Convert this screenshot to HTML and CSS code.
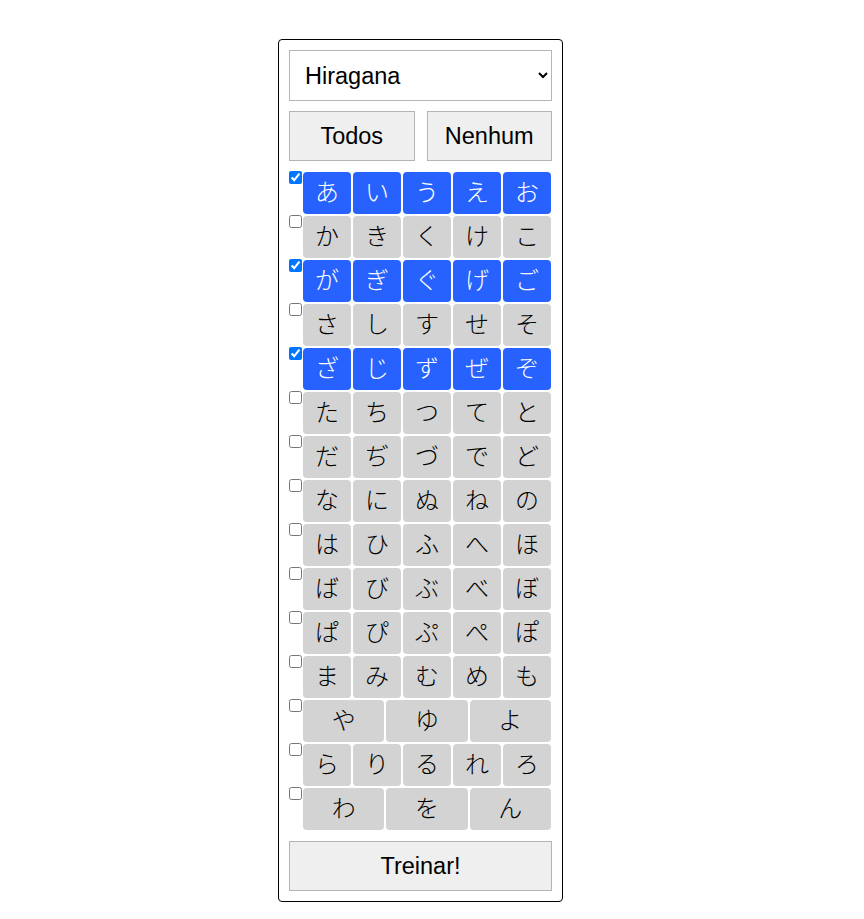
FILE: index.html
```html
<!DOCTYPE html>
<html lang="pt">
<head>
<meta charset="utf-8">
<title>Kana</title>
<link rel="stylesheet" href="styles.css">
</head>
<body>
<div class="panel">
  <select class="kind">
    <option>Hiragana</option>
    <option>Katakana</option>
  </select>
  <div class="actions">
    <button class="btn">Todos</button>
    <button class="btn">Nenhum</button>
  </div>
  <div class="rows">
    <div class="row on"><input type="checkbox" checked><span class="k">あ</span><span class="k">い</span><span class="k">う</span><span class="k">え</span><span class="k">お</span></div>
    <div class="row"><input type="checkbox"><span class="k">か</span><span class="k">き</span><span class="k">く</span><span class="k">け</span><span class="k">こ</span></div>
    <div class="row on"><input type="checkbox" checked><span class="k">が</span><span class="k">ぎ</span><span class="k">ぐ</span><span class="k">げ</span><span class="k">ご</span></div>
    <div class="row"><input type="checkbox"><span class="k">さ</span><span class="k">し</span><span class="k">す</span><span class="k">せ</span><span class="k">そ</span></div>
    <div class="row on"><input type="checkbox" checked><span class="k">ざ</span><span class="k">じ</span><span class="k">ず</span><span class="k">ぜ</span><span class="k">ぞ</span></div>
    <div class="row"><input type="checkbox"><span class="k">た</span><span class="k">ち</span><span class="k">つ</span><span class="k">て</span><span class="k">と</span></div>
    <div class="row"><input type="checkbox"><span class="k">だ</span><span class="k">ぢ</span><span class="k">づ</span><span class="k">で</span><span class="k">ど</span></div>
    <div class="row"><input type="checkbox"><span class="k">な</span><span class="k">に</span><span class="k">ぬ</span><span class="k">ね</span><span class="k">の</span></div>
    <div class="row"><input type="checkbox"><span class="k">は</span><span class="k">ひ</span><span class="k">ふ</span><span class="k">へ</span><span class="k">ほ</span></div>
    <div class="row"><input type="checkbox"><span class="k">ば</span><span class="k">び</span><span class="k">ぶ</span><span class="k">べ</span><span class="k">ぼ</span></div>
    <div class="row"><input type="checkbox"><span class="k">ぱ</span><span class="k">ぴ</span><span class="k">ぷ</span><span class="k">ぺ</span><span class="k">ぽ</span></div>
    <div class="row"><input type="checkbox"><span class="k">ま</span><span class="k">み</span><span class="k">む</span><span class="k">め</span><span class="k">も</span></div>
    <div class="row"><input type="checkbox"><span class="k">や</span><span class="k">ゆ</span><span class="k">よ</span></div>
    <div class="row"><input type="checkbox"><span class="k">ら</span><span class="k">り</span><span class="k">る</span><span class="k">れ</span><span class="k">ろ</span></div>
    <div class="row"><input type="checkbox"><span class="k">わ</span><span class="k">を</span><span class="k">ん</span></div>
  </div>
  <button class="btn train">Treinar!</button>
</div>
</body>
</html>
```
FILE: styles.css
```css
html, body {
  margin: 0;
  padding: 0;
  background: #fff;
}
body {
  padding-top: 39px;
  font-family: "Liberation Sans", Arial, sans-serif;
}
.panel {
  box-sizing: border-box;
  width: 285px;
  margin-left: 278px;
  border: 1px solid #000;
  border-radius: 4px;
  padding: 10px;
  display: flex;
  flex-direction: column;
}
.kind {
  box-sizing: border-box;
  width: 100%;
  height: 51px;
  font-family: "Liberation Sans", Arial, sans-serif;
  font-size: 23.5px;
  color: #000;
  background: #fff;
  border: 1px solid #b5b5b5;
  border-radius: 0;
  padding: 0 8px 0 11px;
  outline: none;
}
.actions {
  display: flex;
  gap: 12px;
  margin-top: 10px;
}
.btn {
  box-sizing: border-box;
  flex: 1;
  height: 50px;
  font-family: "Liberation Sans", Arial, sans-serif;
  font-size: 23.5px;
  color: #000;
  background: #efefef;
  border: 1px solid #b5b5b5;
  border-radius: 0;
  padding: 0;
}
.rows {
  display: flex;
  flex-direction: column;
  gap: 2px;
  margin-top: 11px;
}
.row {
  display: flex;
  gap: 2px;
  height: 42px;
  align-items: stretch;
  padding-right: 1px;
}
.row input {
  width: 13px;
  height: 13px;
  margin: -1px -1px 0 0;
  flex: none;
  align-self: flex-start;
  accent-color: #0075ff;
}
.k {
  flex: 1;
  display: flex;
  align-items: center;
  justify-content: center;
  padding-bottom: 4px;
  box-sizing: border-box;
  background: #d3d3d3;
  color: #000;
  border-radius: 4px;
  font-family: "Noto Sans CJK JP", sans-serif;
  font-size: 24px;
  font-weight: 300;
  line-height: 1;
}
.row.on .k {
  background: #2762ff;
  color: #fff;
}
.train {
  flex: none;
  width: 100%;
  margin-top: 11px;
}
```
